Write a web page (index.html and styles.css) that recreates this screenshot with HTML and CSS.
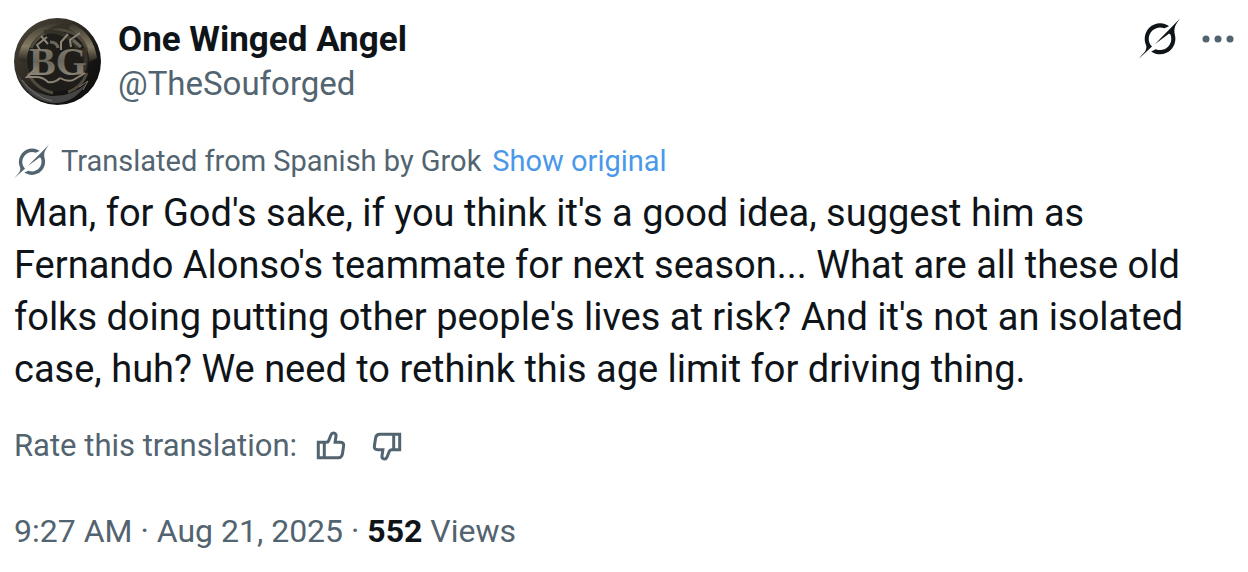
FILE: index.html
```
<!DOCTYPE html>
<html lang="en">
  <head>
    <meta charset="UTF-8" />
    <meta name="viewport" content="width=device-width, initial-scale=1.0" />
    <title>One Winged Angel on X</title>

    <link rel="stylesheet" href="styles.css">
  </head>
  <body>
    <!-- Shared icon shapes -->
    <svg class="sprite" aria-hidden="true">
      <symbol id="grok" viewBox="0 0 33 32">
        <path d="M12.745 20.54l10.97-8.19c.539-.4 1.307-.244 1.564.38 1.349 3.288.746 7.241-1.938 9.955-2.683 2.714-6.417 3.31-9.83 1.954l-3.728 1.745c5.347 3.697 11.84 2.782 15.898-1.324 3.219-3.255 4.216-7.692 3.284-11.693l.008.009c-1.351-5.878.332-8.227 3.782-13.031L33 0l-4.54 4.59v-.014L12.743 20.544m-2.263 1.987c-3.837-3.707-3.175-9.446.1-12.755 2.42-2.449 6.388-3.448 9.852-1.979l3.72-1.737c-.67-.49-1.53-1.017-2.515-1.387-4.455-1.854-9.789-.931-13.41 2.728-3.483 3.523-4.579 8.94-2.697 13.561 1.405 3.454-.899 5.898-3.22 8.364C1.49 30.2.666 31.074 0 32l10.478-9.466" />
      </symbol>
      <symbol id="thumb" viewBox="0 0 30 30">
        <path d="M2.3 11.2h6v15.6h-6zM8.3 11.2h2.2q1.6 0 2.2-1.6l2.3-5.8q1-2.3 3.2-1.7 2.2.7 1.8 3.2l-.9 5.9h5.2q3.8 0 3.3 3.8l-1.2 8q-.6 3.8-4.2 3.8H8.3" />
      </symbol>
    </svg>

    <article class="post">
      <header class="post-header">
        <!-- Avatar -->
        <svg class="avatar" viewBox="0 0 87 87" role="img" aria-label="BG emblem">
          <defs>
            <linearGradient id="metal" x1="0" y1="0" x2="1" y2="1">
              <stop offset="0" stop-color="#4d483b" />
              <stop offset=".35" stop-color="#332f27" />
              <stop offset=".65" stop-color="#171614" />
              <stop offset="1" stop-color="#0b0b0b" />
            </linearGradient>
            <linearGradient id="rim" x1="0" y1="0" x2="0" y2="1">
              <stop offset="0" stop-color="#3d392e" />
              <stop offset=".6" stop-color="#857b63" />
              <stop offset="1" stop-color="#24221d" />
            </linearGradient>
            <linearGradient id="silver" x1="0" y1="0" x2="0" y2="1">
              <stop offset="0" stop-color="#8f8879" />
              <stop offset=".5" stop-color="#6b665b" />
              <stop offset="1" stop-color="#a0988a" />
            </linearGradient>
          </defs>
          <circle cx="43.5" cy="43.5" r="43.5" fill="url(#metal)" />
          <path d="M4 42C6 20 24 4 48 5 29 11 15 24 12 44z" fill="url(#rim)" />
          <path d="M58 6c14 5 23 18 25 34l-8 4C74 29 68 18 54 10z" fill="url(#rim)" />
          <circle cx="44" cy="42" r="31" fill="#1f1d19" />
          <path d="M17 30Q27 11 47 12q20 2 26 20M14 55q8 16 25 20M54 74q14-5 19-19" fill="none" stroke="#4e493d" stroke-width="3" />
          <path d="M30 14q22-3 34 16M70 30q5 16-4 28" fill="none" stroke="#35322a" stroke-width="4" />
          <path d="M3 55q12 20 34 23 20 1 35-12-12 20-33 19Q13 82 3 55z" fill="#454545" />
          <path d="M65 69l9-6-5 9M8 62q12 17 30 21" fill="none" stroke="#77736b" stroke-width="1" />
          <text class="monogram" x="15" y="57">BG</text>
          <!-- Flourishes round the letters -->
          <path d="M33 19l-10 8 3 5M27 18l7 8M54 16l-7 8v8M66 15l-10 7 1 7M22 50l-9 9h9q7 0 12 5 7 1 12-4M46 60q9 5 15 1l10-6" fill="none" stroke="#8b8475" stroke-width="2" />
          <path d="M36 24q7 0 8 6M59 22l8 7" fill="none" stroke="#6b665b" stroke-width="3" />
        </svg>

        <div class="author">
          <a class="name" href="#">One Winged Angel</a>
          <a class="handle" href="#">@TheSouforged</a>
        </div>

        <div class="actions">
          <button class="icon-button" type="button" aria-label="Explain this post">
            <svg class="grok-large"><use href="#grok" /></svg>
          </button>
          <button class="icon-button" type="button" aria-label="More">
            <svg class="more" viewBox="0 0 32 8">
              <circle cx="4" cy="4" r="3.5" />
              <circle cx="16" cy="4" r="3.5" />
              <circle cx="28" cy="4" r="3.5" />
            </svg>
          </button>
        </div>
      </header>

      <div class="translated">
        <svg class="grok-small" aria-hidden="true"><use href="#grok" /></svg>
        <span>Translated from Spanish by Grok</span>
        <a class="show-original" href="#">Show original</a>
      </div>

      <p class="post-text">Man, for God's sake, if you think it's a good idea, suggest him as Fernando Alonso's teammate for next season... What are all these old folks doing putting other people's lives at risk? And it's not an isolated case, huh? We need to rethink this age limit for driving thing.</p>

      <div class="rating">
        <span>Rate this translation:</span>
        <button class="icon-button" type="button" aria-label="Good translation">
          <svg class="thumb"><use href="#thumb" /></svg>
        </button>
        <button class="icon-button" type="button" aria-label="Bad translation">
          <svg class="thumb thumb-down"><use href="#thumb" /></svg>
        </button>
      </div>

      <footer class="meta">
        <a href="#"><time datetime="2025-08-21T09:27">9:27 AM · Aug 21, 2025</time></a> · <strong>552</strong> Views
      </footer>
    </article>
  </body>
</html>
```

FILE: styles.css
```
* {
  box-sizing: border-box;
}

body {
  margin: 0;
  background-color: #fff;
  color: #0f1419;
  font-family: Roboto, "Liberation Sans", sans-serif;
}

a {
  color: inherit;
  text-decoration: none;
}

a:hover {
  text-decoration: underline;
}

.sprite {
  position: absolute;
  width: 0;
  height: 0;
}

.post {
  padding: 18px 14px;
}

/* Avatar, names and the action buttons */
.post-header {
  display: flex;
  align-items: flex-start;
}

.avatar {
  flex: none;
  width: 87px;
  height: 87px;
}

.monogram {
  fill: url(#silver);
  font-family: "Liberation Serif", serif;
  font-size: 40px;
  font-weight: bold;
}

.author {
  display: flex;
  flex-direction: column;
  flex: 1;
  margin-left: 17px;
  font-size: 33px;
  line-height: 44px;
}

.name {
  font-size: 35px;
  font-weight: 700;
}

.handle {
  color: #536471;
}

.actions {
  display: flex;
  align-items: center;
  gap: 22px;
}

.icon-button {
  display: flex;
  padding: 0;
  border: none;
  background: none;
  color: #536471;
  cursor: pointer;
}

svg {
  fill: currentColor;
}

.grok-large {
  width: 41px;
  height: 41px;
  color: #0f1419;
}

.more {
  width: 32px;
  height: 8px;
}

/* Translation note */
.translated {
  display: flex;
  align-items: center;
  margin-top: 35px;
  color: #536471;
  font-size: 29px;
  line-height: 40px;
}

.grok-small {
  width: 35px;
  height: 35px;
  margin-right: 12px;
}

.show-original {
  margin-left: 11px;
  color: #4a99e9;
}

.post-text {
  margin: 6px 0 0;
  font-size: 38px;
  line-height: 52px;
}

.rating {
  display: flex;
  align-items: center;
  margin-top: 31px;
  color: #536471;
  font-size: 31px;
  line-height: 40px;
}

.rating .icon-button {
  margin-left: 19px;
}

.rating .icon-button + .icon-button {
  margin-left: 26px;
}

.thumb {
  width: 30px;
  height: 30px;
  fill: none;
  stroke: currentColor;
  stroke-width: 3;
}

.thumb-down {
  transform: rotate(180deg);
}

.meta {
  margin-top: 44px;
  color: #536471;
  font-size: 32px;
  line-height: 42px;
}

.meta strong {
  color: #0f1419;
}
```
